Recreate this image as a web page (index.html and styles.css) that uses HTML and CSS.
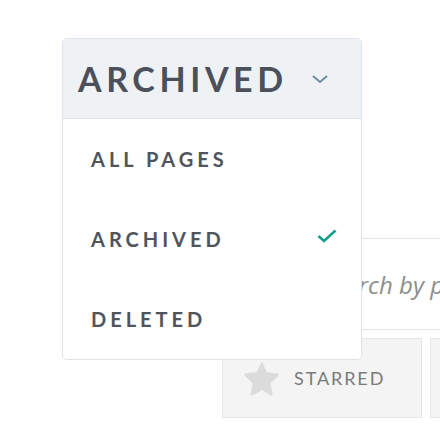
FILE: index.html
```html
<!DOCTYPE html>
<html lang="en">
<head>
  <meta charset="UTF-8">
  <meta name="viewport" content="width=device-width, initial-scale=1.0">
  <title>Pages</title>
  <link rel="stylesheet" href="styles.css">
</head>
<body>
  <div class="page">
    <div class="search">
      <input type="text" placeholder="Search by page title">
    </div>

    <div class="filters">
      <button class="filter">
        <svg viewBox="0 0 24 24" aria-hidden="true">
          <path d="M12 1.8l3.1 6.5 7 .9c.6.1.8.8.4 1.2l-5.1 4.9 1.3 7c.1.6-.5 1-1 .7L12 19.6 5.8 23c-.5.3-1.1-.1-1-.7l1.3-7L1 10.4c-.4-.4-.2-1.1.4-1.2l7-.9z"/>
        </svg>
        Starred
      </button>
      <button class="filter"></button>
    </div>
  </div>

  <div class="dropdown">
    <div class="dropdown-head">
      <span>Archived</span>
      <svg class="chevron" viewBox="0 0 16 8" aria-hidden="true">
        <path d="M1 1l7 6 7-6"/>
      </svg>
    </div>
    <ul class="dropdown-list">
      <li>All pages</li>
      <li>Archived
        <svg class="check" viewBox="0 0 20 14" aria-hidden="true">
          <path d="M1.5 7l5.5 5L18.5 1.5"/>
        </svg>
      </li>
      <li>Deleted</li>
    </ul>
  </div>
</body>
</html>
```

FILE: styles.css
```css
* {
  margin: 0;
  padding: 0;
  box-sizing: border-box;
}

html, body {
  width: 440px;
  height: 424px;
  overflow: hidden;
  background-color: #fff;
  font-family: 'Lato', sans-serif;
}

.page {
  padding: 238px 0 0 222px;
  width: 1000px;
}

.search {
  width: 700px;
  height: 92px;
  border: 1px solid #e4e4e4;
  display: flex;
  align-items: center;
}

.search input {
  border: none;
  outline: none;
  width: 100%;
  padding-left: 98px;
  font-family: 'Open Sans', sans-serif;
  font-style: italic;
  font-size: 24px;
  color: #555;
  background: transparent;
}

.search input::placeholder {
  color: #8d8d8d;
}

.filters {
  display: flex;
  gap: 8px;
  margin-top: 8px;
}

.filter {
  width: 200px;
  height: 80px;
  background-color: #f4f4f4;
  border: 1px solid #e6e6e6;
  display: flex;
  align-items: center;
  padding-left: 20px;
  gap: 13px;
  font-family: 'Lato', sans-serif;
  font-size: 18px;
  text-transform: uppercase;
  letter-spacing: 1.9px;
  color: #7a7a7a;
}

.filter svg {
  width: 38px;
  height: 38px;
  fill: #dbdbdb;
}

.dropdown {
  position: absolute;
  left: 62px;
  top: 38px;
  width: 300px;
  background-color: #fff;
  border: 1px solid #dde3e8;
  border-radius: 5px;
  overflow: hidden;
}

.dropdown-head {
  height: 80px;
  background-color: #eff2f5;
  border-bottom: 1px solid #dde3e8;
  display: flex;
  align-items: center;
  padding-left: 15px;
  font-size: 34px;
  font-weight: 700;
  letter-spacing: 4.6px;
  text-transform: uppercase;
  color: #4b505a;
}

.chevron {
  width: 16px;
  height: 8px;
  margin-left: 24px;
  fill: none;
  stroke: #6f8fa1;
  stroke-width: 2;
}

.dropdown-list {
  list-style: none;
}

.dropdown-list li {
  height: 80px;
  display: flex;
  align-items: center;
  justify-content: space-between;
  padding: 0 24px 0 28px;
  font-size: 20px;
  font-weight: 700;
  letter-spacing: 4px;
  text-transform: uppercase;
  color: #4f545d;
}

.check {
  width: 20px;
  height: 14px;
  margin-top: -6px;
  fill: none;
  stroke: #13a08c;
  stroke-width: 2.6;
}
```
